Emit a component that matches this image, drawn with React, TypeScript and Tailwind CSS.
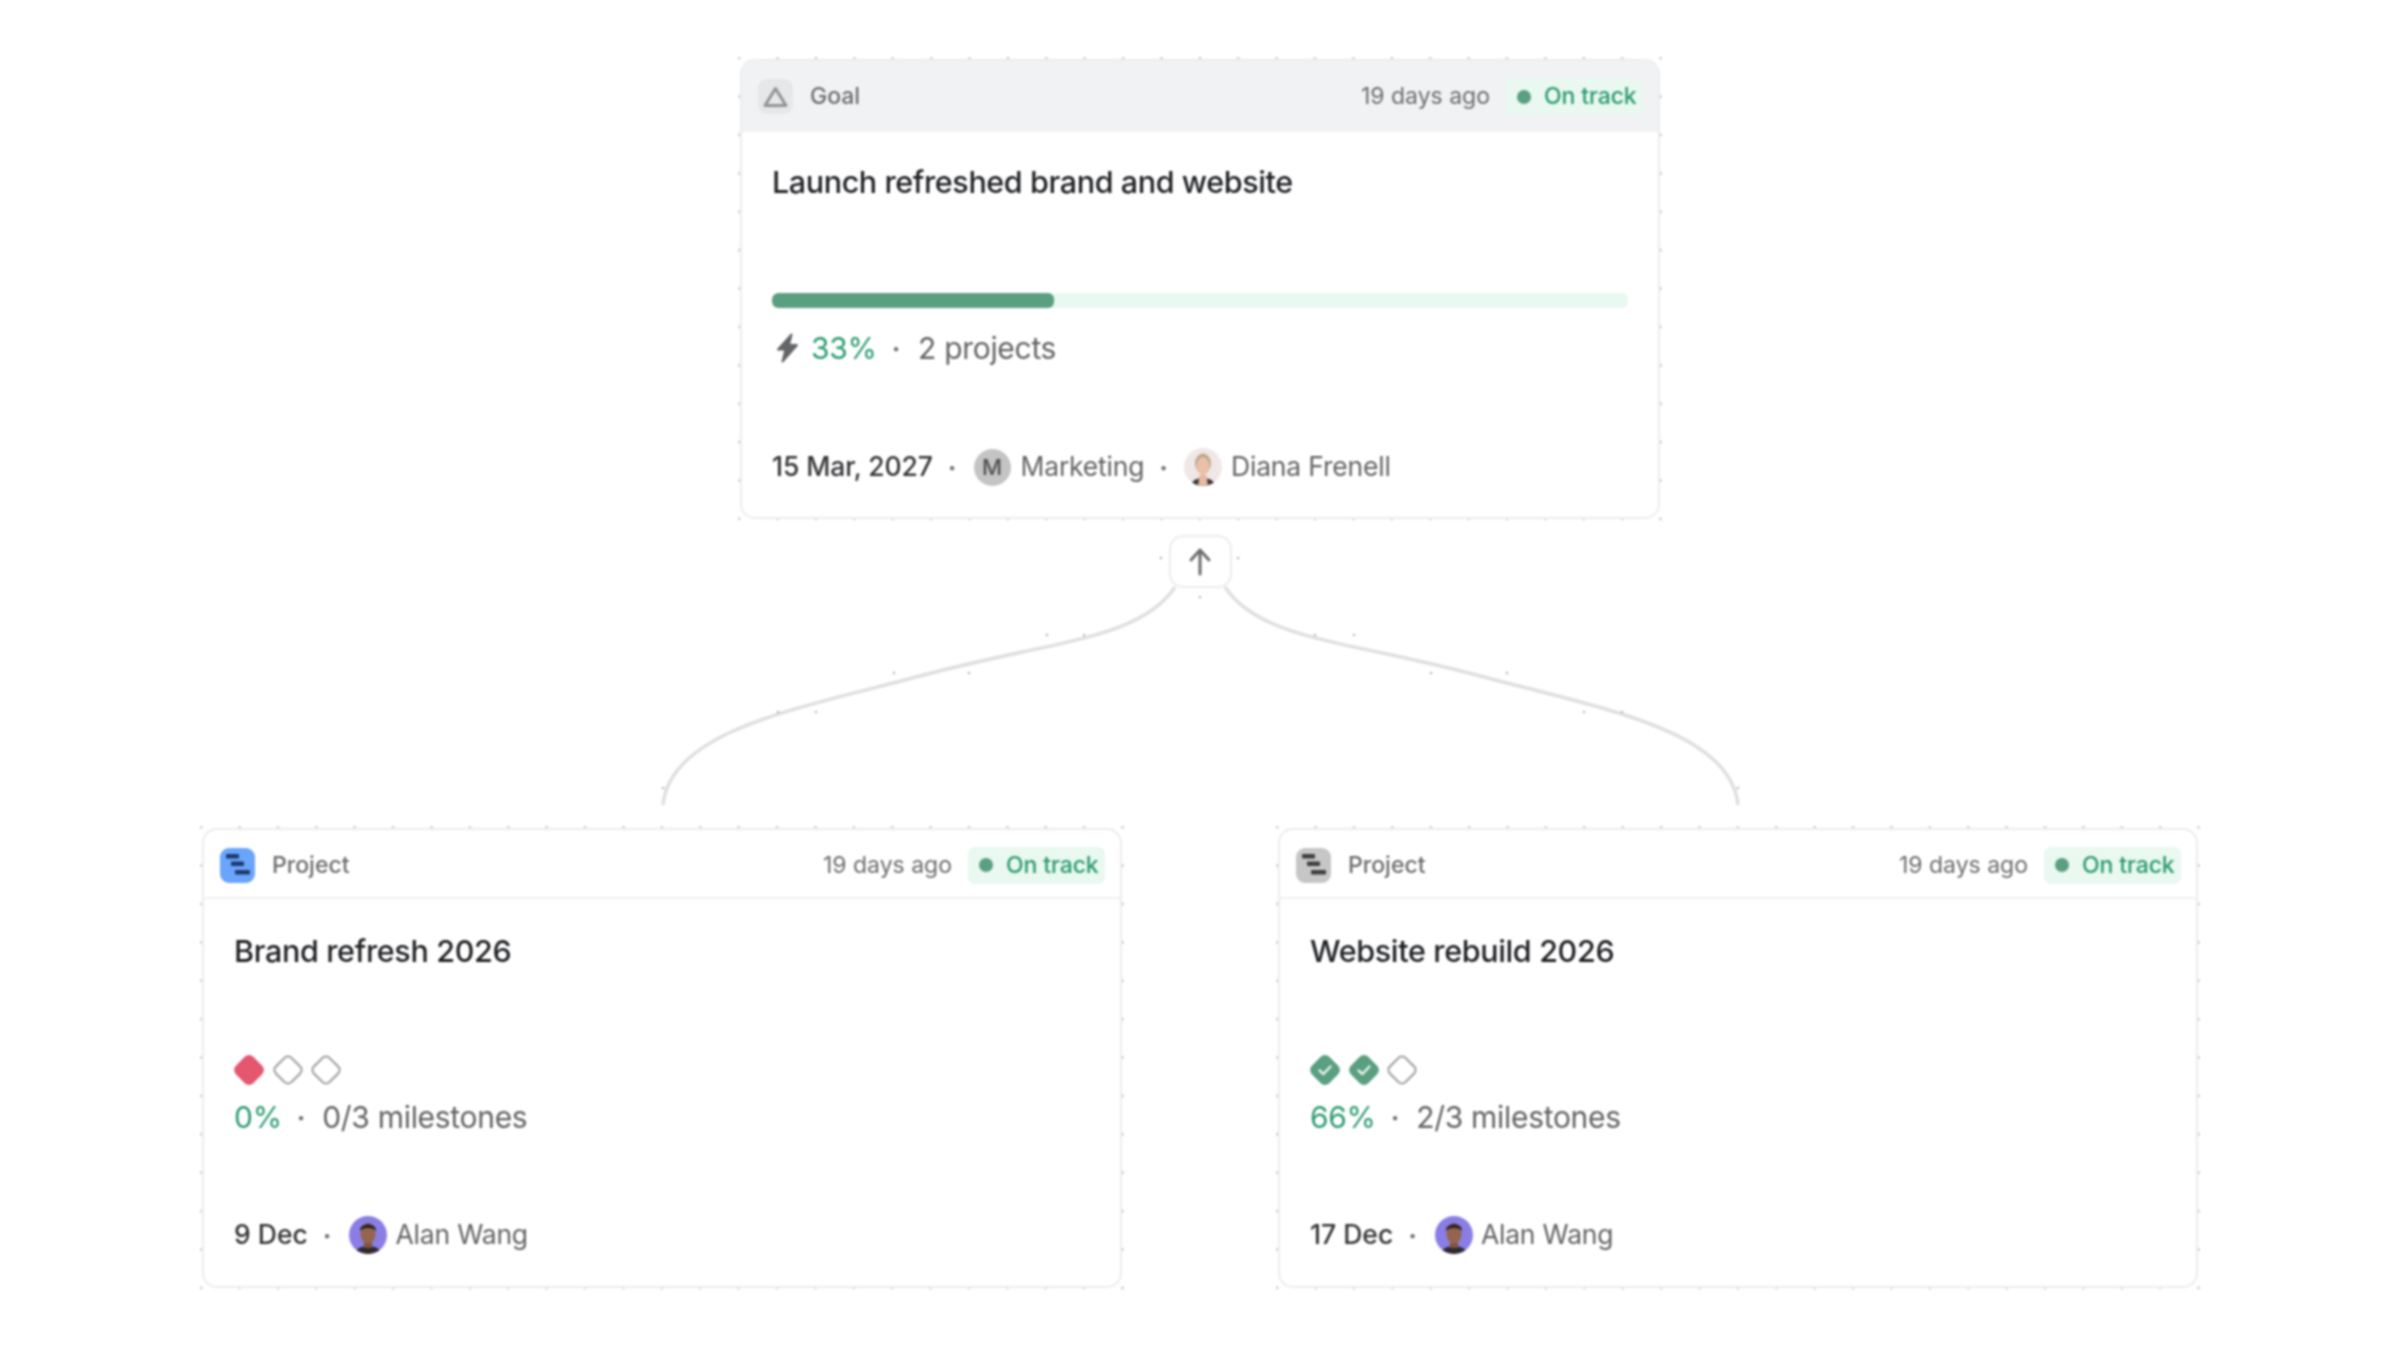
import React from "react";

const DOTS: [number, number][] = [
  [1047, 635], [1084, 635], [894, 673], [969, 673], [778, 712], [816, 712], [663, 788],
  [1161, 558], [1238, 558], [1200, 597],
  [1315, 635], [1354, 635], [1431, 673], [1507, 673], [1584, 712], [1622, 712], [1738, 788],
];

function GoalIcon() {
  return (
    <div className="flex h-[35px] w-[35px] items-center justify-center rounded-[9px] bg-[#e6e7e9]">
      <svg width="27" height="24" viewBox="0 0 27 24" fill="none">
        <path d="M13.5 3.5 L24 20.5 H3 Z" stroke="#929395" strokeWidth="3" strokeLinejoin="round" />
      </svg>
    </div>
  );
}

function ProjectIcon({ bg, bar }: { bg: string; bar: string }) {
  return (
    <svg width="35" height="35" viewBox="0 0 35 35">
      <rect width="35" height="35" rx="9" fill={bg} />
      <rect x="6" y="6" width="13" height="4.5" rx="1" fill={bar} />
      <rect x="11" y="13.5" width="13" height="4.5" rx="1" fill={bar} />
      <rect x="15" y="22" width="15" height="4.5" rx="1" fill={bar} />
    </svg>
  );
}

function Bolt() {
  return (
    <svg width="23" height="30" viewBox="0 0 23 30" className="mr-[12px] ml-[4px]">
      <path
        d="M15.5 1.5 L2 16.5 H9.5 L6.5 28.5 L21 12 H13 Z"
        fill="#646567"
        stroke="#646567"
        strokeWidth="2"
        strokeLinejoin="round"
      />
    </svg>
  );
}

function Diamond({ kind }: { kind: "red" | "done" | "empty" }) {
  return (
    <svg width="32" height="32" viewBox="0 0 32 32">
      {kind === "empty" ? (
        <rect x="5" y="5" width="22" height="22" rx="5" transform="rotate(45 16 16)" fill="#ffffff" stroke="#a9a9a9" strokeWidth="2.4" />
      ) : (
        <rect x="3.7" y="3.7" width="24.6" height="24.6" rx="6" transform="rotate(45 16 16)" fill={kind === "red" ? "#e5566f" : "#5a9f80"} />
      )}
      {kind === "done" && (
        <path d="M10.5 16.5 L14.5 20 L21.5 12.5" fill="none" stroke="#e8f3ee" strokeWidth="2.4" strokeLinecap="round" strokeLinejoin="round" />
      )}
    </svg>
  );
}

function AlanAvatar({ id }: { id: string }) {
  return (
    <svg width="38" height="38" viewBox="0 0 38 38" className="ml-[3px]">
      <defs>
        <clipPath id={id}>
          <circle cx="19" cy="19" r="19" />
        </clipPath>
      </defs>
      <g clipPath={`url(#${id})`}>
        <rect width="38" height="38" fill="#8a7ee6" />
        <path d="M6 38 C7 32 13 30 19 30 C25 30 31 32 32 38 Z" fill="#2f2a2c" />
        <rect x="15" y="24" width="8" height="8" fill="#7d5240" />
        <ellipse cx="19" cy="17.5" rx="7.5" ry="10.5" fill="#94654c" />
        <path d="M11 15 C10 6 28 6 27 15 C25 11 13 11 11 15 Z" fill="#2b2325" />
      </g>
    </svg>
  );
}

function DianaAvatar() {
  return (
    <svg width="38" height="38" viewBox="0 0 38 38" className="ml-[1px]">
      <defs>
        <clipPath id="diana-clip">
          <circle cx="19" cy="19" r="19" />
        </clipPath>
      </defs>
      <g clipPath="url(#diana-clip)">
        <rect width="38" height="38" fill="#efe8e6" />
        <path d="M7 38 C8 32 13 30 19 30 C25 30 30 32 31 38 Z" fill="#3b3533" />
        <path d="M14 38 L15.5 27 H22.5 L24 38 Z" fill="#e5b9a2" />
        <ellipse cx="19" cy="15.5" rx="8" ry="10" fill="#b9a98c" />
        <ellipse cx="19" cy="18" rx="6.5" ry="9" fill="#e9c0a8" />
      </g>
    </svg>
  );
}

function CardHeader({ goal, icon, label }: { goal?: boolean; icon: React.ReactNode; label: string }) {
  return (
    <div
      className={
        goal
          ? "flex h-[71px] items-center bg-[#f1f2f4] pr-[15px] pl-[16px]"
          : "flex h-[69px] items-center border-b-2 border-[#f1f1f1] pt-[3px] pr-[15px] pl-[16px]"
      }
    >
      {icon}
      <span className="ml-[17px] text-[23px] font-medium text-[#6c6d6f]">{label}</span>
      <span className="ml-auto text-[23px] text-[#6c6d6f]">19 days ago</span>
      <div className="ml-[16px] flex h-[37px] w-[137px] items-center rounded-[7px] bg-[#e9f8f0] pl-[11px]">
        <span className="h-[14px] w-[14px] rounded-full bg-[#5a9f80]" />
        <span className="ml-[13px] text-[23px] font-medium tracking-[-0.1px] text-[#2a9a70]">On track</span>
      </div>
    </div>
  );
}

function Sep() {
  return <span className="mx-[15px] text-[26px] font-bold text-[#6c6d6f]">·</span>;
}

function Shell({ children }: { children: React.ReactNode }) {
  return (
    <div className="bg-[radial-gradient(circle,#c4c4c4_1px,transparent_1.5px)] bg-[size:38.4px_38.4px] bg-[position:-18px_-18px] p-[2px]">
      <div className="h-[460px] w-[920px] overflow-hidden rounded-[15px] border-2 border-[#ededed] bg-white">
        {children}
      </div>
    </div>
  );
}

function ProjectCard({
  id,
  title,
  iconBg,
  iconBar,
  diamonds,
  pct,
  milestones,
  date,
}: {
  id: string;
  title: string;
  iconBg: string;
  iconBar: string;
  diamonds: ("red" | "done" | "empty")[];
  pct: string;
  milestones: string;
  date: string;
}) {
  return (
    <Shell>
      <CardHeader icon={<ProjectIcon bg={iconBg} bar={iconBar} />} label="Project" />
      <div className="flex flex-col px-[30px]">
        <div className="mt-[32px] flex h-[40px] items-center text-[30.5px] font-medium tracking-[-0.35px] text-[#1f2023]">{title}</div>
        <div className="mt-[83px] ml-[-1px] flex h-[32px] gap-[6.5px]">
          {diamonds.map((d, i) => (
            <Diamond key={i} kind={d} />
          ))}
        </div>
        <div className="mt-[13px] flex h-[36px] items-center text-[30px] tracking-[-0.3px]">
          <span className="text-[#2a9a70]">{pct}</span>
          <Sep />
          <span className="ml-[2px] text-[#626365]">{milestones}</span>
        </div>
        <div className="mt-[81px] flex h-[38px] items-center text-[26.5px]">
          <span className="font-medium text-[#333436]">{date}</span>
          <Sep />
          <AlanAvatar id={id} />
          <span className="ml-[8px] tracking-[-0.2px] text-[#626365]">Alan Wang</span>
        </div>
      </div>
    </Shell>
  );
}

export default function App() {
  return (
    <div className="flex h-[1350px] flex-col items-center overflow-hidden bg-white pt-[57px] font-['Inter',sans-serif] blur-[0.8px]">
      <Shell>
        <CardHeader goal icon={<GoalIcon />} label="Goal" />
        <div className="flex flex-col px-[30px]">
          <div className="mt-[30px] flex h-[40px] items-center text-[30.5px] font-medium tracking-[-0.4px] text-[#1f2023]">
            Launch refreshed brand and website
          </div>
          <div className="mt-[91px] h-[15px] w-[856px] overflow-hidden rounded-[6px] bg-[#e9f8f1]">
            <div className="h-full w-[33%] rounded-[6px] bg-[#5a9f80]" />
          </div>
          <div className="mt-[22px] flex h-[36px] items-center text-[30px] tracking-[-0.3px]">
            <Bolt />
            <span className="text-[#2a9a70]">33%</span>
            <Sep />
            <span className="ml-[3px] text-[#626365]">2 projects</span>
          </div>
          <div className="mt-[82px] flex h-[38px] items-center text-[26.5px]">
            <span className="font-medium tracking-[-0.1px] text-[#333436]">15 Mar, 2027</span>
            <Sep />
            <div className="ml-[2px] flex h-[37px] w-[37px] items-center justify-center rounded-full bg-[#c4c4c5] text-[22px] font-medium text-[#4f5052]">
              M
            </div>
            <span className="ml-[10px] tracking-[-0.2px] text-[#626365]">Marketing</span>
            <Sep />
            <DianaAvatar />
            <span className="ml-[9px] tracking-[-0.2px] text-[#626365]">Diana Frenell</span>
          </div>
        </div>
      </Shell>

      <div className="relative flex h-[305px] w-[2000px] justify-center pt-[14px]">
        <svg className="absolute top-0 left-0" width="2000" height="305" viewBox="200 521 2000 305" fill="none">
          <path
            d="M1175 587 C1140 640 1050 641 920 676 C800 708 670 730 663 805"
            stroke="#dfdfdf"
            strokeWidth="3.5"
          />
          <path
            d="M1225 587 C1260 640 1350 641 1480 676 C1600 708 1731 730 1738 805"
            stroke="#dfdfdf"
            strokeWidth="3.5"
          />
          {DOTS.map(([x, y], i) => (
            <circle key={i} cx={x} cy={y} r="1.2" fill="#b4b4b4" />
          ))}
        </svg>
        <div className="relative flex h-[53px] w-[63px] items-center justify-center rounded-[14px] border-2 border-[#ededed] bg-white">
          <svg width="24" height="30" viewBox="0 0 24 30" fill="none">
            <path
              d="M12 27 V3 M3 13 L12 3 L21 13"
              stroke="#6c6d6f"
              strokeWidth="3"
              strokeLinecap="round"
              strokeLinejoin="round"
            />
          </svg>
        </div>
      </div>

      <div className="flex gap-[152px]">
        <ProjectCard
          id="alan-a"
          title="Brand refresh 2026"
          iconBg="#6aa5fb"
          iconBar="#1e3a6e"
          diamonds={["red", "empty", "empty"]}
          pct="0%"
          milestones="0/3 milestones"
          date="9 Dec"
        />
        <ProjectCard
          id="alan-b"
          title="Website rebuild 2026"
          iconBg="#c6c6c7"
          iconBar="#3f3f41"
          diamonds={["done", "done", "empty"]}
          pct="66%"
          milestones="2/3 milestones"
          date="17 Dec"
        />
      </div>
    </div>
  );
}
